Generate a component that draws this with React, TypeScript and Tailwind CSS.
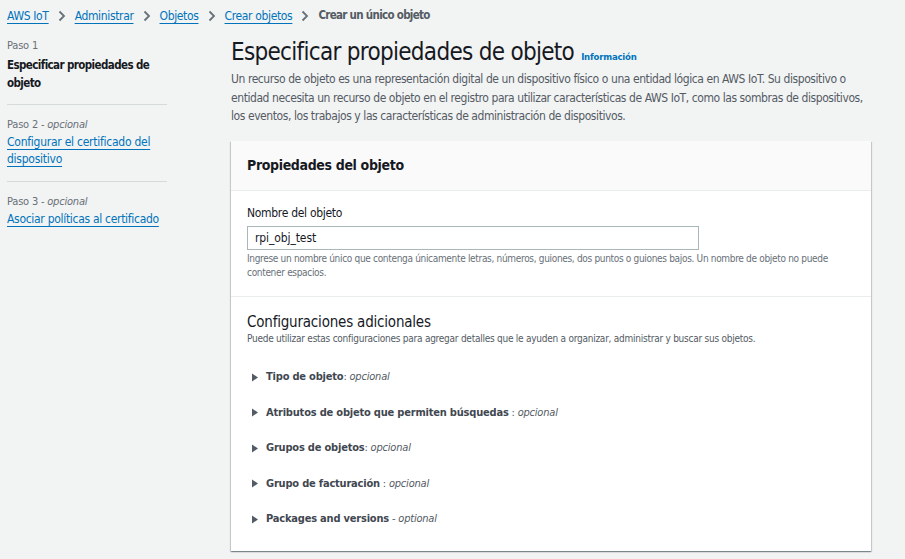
import React from "react";

const font = { fontFamily: "'Liberation Sans Narrow', 'DejaVu Sans Condensed', 'Liberation Sans', sans-serif" };

const crumbs = ["AWS IoT", "Administrar", "Objetos", "Crear objetos"];

const expanders = [
  { label: "Tipo de objeto", sep: ": ", opt: "opcional" },
  { label: "Atributos de objeto que permiten búsquedas", sep: " : ", opt: "opcional" },
  { label: "Grupos de objetos", sep: ": ", opt: "opcional" },
  { label: "Grupo de facturación", sep: " : ", opt: "opcional" },
  { label: "Packages and versions", sep: " - ", opt: "optional" },
];

function Chevron() {
  return (
    <svg width="10" height="12" viewBox="0 0 10 12" className="mx-[8px]">
      <path d="M2.5 1.5 L7 6 L2.5 10.5" fill="none" stroke="#687078" strokeWidth="1.8" />
    </svg>
  );
}

export default function App() {
  return (
    <div className="min-h-screen bg-[#f2f3f3] text-[#16191f]" style={font}>
      {/* breadcrumb */}
      <nav className="flex items-center h-[31px] px-[7px] text-[12px] tracking-[-0.35px]">
        {crumbs.map((c) => (
          <React.Fragment key={c}>
            <a className="text-[#0073bb] underline underline-offset-[3px] decoration-[1px]">{c}</a>
            <Chevron />
          </React.Fragment>
        ))}
        <span className="font-bold text-[#545b64] text-[11.5px] tracking-[-0.7px]">Crear un único objeto</span>
      </nav>

      <div className="flex">
        {/* pasos */}
        <aside className="w-[160px] ml-[7px] shrink-0 pt-[7px]">
          <div className="text-[11px] text-[#687078] leading-[16px] tracking-[-0.2px]">Paso 1</div>
          <div className="text-[11.5px] font-bold leading-[18px] mt-[2px] tracking-[-0.6px]">Especificar propiedades de objeto</div>
          <div className="border-t border-[#d5dbdb] mt-[12px] mb-[12px]" />
          <div className="text-[11px] text-[#687078] leading-[16px] tracking-[-0.2px]">
            Paso 2 - <i>opcional</i>
          </div>
          <a className="block text-[12px] leading-[17px] mt-[1px] text-[#0073bb] underline underline-offset-[3px] tracking-[-0.25px]">
            Configurar el certificado del dispositivo
          </a>
          <div className="border-t border-[#d5dbdb] mt-[13px] mb-[12px]" />
          <div className="text-[11px] text-[#687078] leading-[16px] tracking-[-0.2px]">
            Paso 3 - <i>opcional</i>
          </div>
          <a className="block text-[12px] leading-[17px] mt-[1px] text-[#0073bb] underline underline-offset-[3px] tracking-[-0.3px]">
            Asociar políticas al certificado
          </a>
        </aside>

        {/* contenido */}
        <main className="ml-[64px] w-[640px] pt-[6px]">
          <div className="flex items-baseline gap-[7px]">
            <h1 className="text-[24px] leading-[30px] font-normal tracking-[-0.7px]">Especificar propiedades de objeto</h1>
            <a className="text-[9.5px] font-bold text-[#0073bb] tracking-[-0.2px]">Información</a>
          </div>
          <p className="text-[12px] leading-[18.5px] text-[#545b64] mt-[3px] tracking-[-0.43px]">
            Un recurso de objeto es una representación digital de un dispositivo físico o una entidad lógica en AWS IoT. Su dispositivo o
            entidad necesita un recurso de objeto en el registro para utilizar características de AWS IoT, como las sombras de dispositivos,
            los eventos, los trabajos y las características de administración de dispositivos.
          </p>

          <section className="mt-[15px] bg-white shadow-[0_1px_1px_0_rgba(0,28,36,0.3),1px_1px_1px_0_rgba(0,28,36,0.15),-1px_1px_1px_0_rgba(0,28,36,0.15)]">
            <header className="h-[50px] bg-[#fafafa] border-b border-[#eaeded] flex items-center px-[16px]">
              <h2 className="text-[14px] font-bold tracking-[-0.35px]">Propiedades del objeto</h2>
            </header>

            <div className="px-[16px] pt-[13px] pb-[16px] border-b border-[#eaeded]">
              <label className="block text-[12px] leading-[18px] tracking-[-0.3px]">Nombre del objeto</label>
              <div className="mt-[4px] w-[452px] h-[24px] border border-[#aab7b8] flex items-center px-[7px] text-[12px] tracking-[-0.1px]">
                rpi_obj_test
              </div>
              <p className="mt-[2px] text-[10px] leading-[14px] text-[#687078] tracking-[-0.32px]">
                Ingrese un nombre único que contenga únicamente letras, números, guiones, dos puntos o guiones bajos. Un nombre de objeto no puede
                contener espacios.
              </p>
            </div>

            <div className="px-[16px] pt-[15px] pb-[14px]">
              <h3 className="text-[15px] leading-[20px] font-normal tracking-[-0.2px]">Configuraciones adicionales</h3>
              <p className="text-[10px] leading-[14px] text-[#545b64] tracking-[-0.25px]">
                Puede utilizar estas configuraciones para agregar detalles que le ayuden a organizar, administrar y buscar sus objetos.
              </p>
              <div className="mt-[14px]">
                {expanders.map((e) => (
                  <div key={e.label} className="h-[35.5px] flex items-center text-[11px] tracking-[-0.2px]">
                    <svg width="8" height="9" viewBox="0 0 8 9" className="ml-[4px] mr-[7px]">
                      <path d="M1 0.5 L7 4.5 L1 8.5 Z" fill="#545b64" />
                    </svg>
                    <span className="font-bold text-[#414750]">{e.label}</span>
                    <span className="text-[#545b64] whitespace-pre">{e.sep}</span>
                    <i className="text-[#545b64]">{e.opt}</i>
                  </div>
                ))}
              </div>
            </div>
          </section>
        </main>
      </div>
    </div>
  );
}
